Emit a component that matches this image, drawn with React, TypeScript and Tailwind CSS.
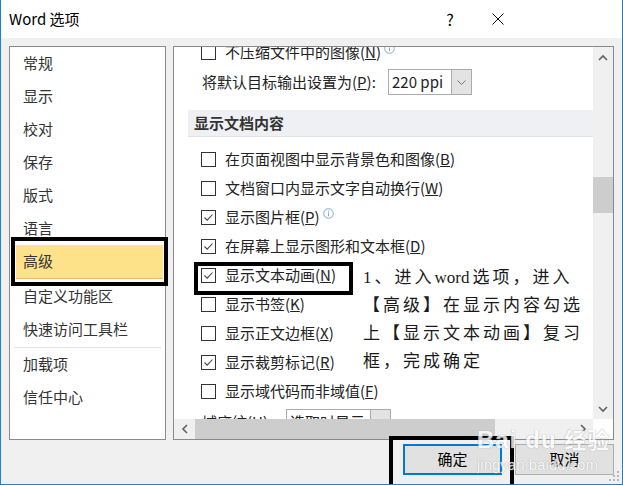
import React from "react";

const Info = () => (
  <svg width="11" height="11" viewBox="0 0 11 11" className="ml-[3px] -mt-[9px]">
    <circle cx="5.5" cy="5.5" r="4.8" fill="none" stroke="#86a5d6" strokeWidth="1" />
    <rect x="5" y="4.5" width="1" height="3.8" fill="#86a5d6" />
    <rect x="5" y="2.6" width="1" height="1" fill="#86a5d6" />
  </svg>
);

const Box = ({ on }: { on?: boolean }) => (
  <div className="w-[15px] h-[15px] border border-[#333] bg-white shrink-0 flex items-center justify-center">
    {on && (
      <svg width="13" height="13" viewBox="0 0 13 13">
        <path d="M2.5 6.5 L5.2 9.2 L10.5 3.5" fill="none" stroke="#444" strokeWidth="1.1" />
      </svg>
    )}
  </div>
);

const Row = ({ on, text, k, info }: { on?: boolean; text: string; k: string; info?: boolean }) => (
  <div className="h-[29px] flex items-center pl-[27px] gap-[9px] shrink-0">
    <Box on={on} />
    <span className="flex items-center whitespace-nowrap">
      {text}(<u>{k}</u>){info && <Info />}
    </span>
  </div>
);

const Chev = ({ dir }: { dir: "up" | "down" | "left" | "right" }) => {
  const d = {
    up: "M1 6 L5 2 L9 6",
    down: "M1 2 L5 6 L9 2",
    left: "M6 1 L2 5 L6 9",
    right: "M2 1 L6 5 L2 9",
  }[dir];
  const w = dir === "up" || dir === "down" ? 10 : 8;
  const h = dir === "up" || dir === "down" ? 8 : 10;
  return (
    <svg width={w} height={h} viewBox={`0 0 ${w} ${h}`}>
      <path d={d} fill="none" stroke="#606060" strokeWidth="1.6" />
    </svg>
  );
};

const SelArrow = () => (
  <svg width="9" height="5" viewBox="0 0 9 5">
    <path d="M0.5 0.5 L4.5 4.5 L8.5 0.5" fill="none" stroke="#666" strokeWidth="0.9" />
  </svg>
);

const navTop = ["常规", "显示", "校对", "保存", "版式", "语言"];

export default function App() {
  return (
    <div className="w-[623px] h-[485px] bg-white border-x border-b border-[#1883d7] flex flex-col relative overflow-hidden text-[#222] font-['Noto_Sans_CJK_SC',sans-serif]">
      {/* title bar */}
      <div className="h-[38px] shrink-0 flex items-center pl-[8px] text-[15px] text-black">
        <span className="flex-1">Word 选项</span>
        <span className="w-[20px] text-center text-[16px] mr-[32px]">?</span>
        <svg width="12" height="12" viewBox="0 0 12 12" className="mr-[118px]">
          <path d="M0.5 0.5 L11.5 11.5 M11.5 0.5 L0.5 11.5" stroke="#111" strokeWidth="1" />
        </svg>
      </div>

      {/* body */}
      <div className="flex-1 bg-[#f0f0f0] flex flex-col px-[8px] pt-[8px]">
        <div className="flex gap-[7px] h-[394px]">
          {/* left nav */}
          <div className="w-[157px] border border-[#8a8a8e] bg-white flex flex-col text-[15px] text-[#333] relative">
            {navTop.map((t) => (
              <div key={t} className="h-[33px] flex items-center pl-[13px] shrink-0">
                {t}
              </div>
            ))}
            <div className="h-[34px] mb-[1px] flex items-center ml-[6px] mr-[2px] pl-[7px] bg-[#fee28a] border-b border-[#e9b965] shrink-0">
              高级
            </div>
            <div className="h-[33px] flex items-center pl-[13px] shrink-0">自定义功能区</div>
            <div className="h-[33px] flex items-center pl-[13px] shrink-0">快速访问工具栏</div>
            <div className="mt-[1px] mx-[4px] h-px bg-[#e3e3ea] shrink-0" />
            <div className="h-[33px] flex items-center pl-[13px] shrink-0">加载项</div>
            <div className="h-[33px] flex items-center pl-[13px] shrink-0">信任中心</div>
            <div className="absolute left-[1px] top-[190px] w-[157px] h-[49px] border-[4px] border-black" />
          </div>

          {/* right panel */}
          <div className="w-[441px] border border-[#8a8a8e] bg-white flex flex-col">
            <div className="flex-1 flex min-h-0">
              <div className="flex-1 overflow-hidden flex flex-col text-[15px] text-[#222] relative">
                <div className="mt-[-9px]">
                  <Row text="不压缩文件中的图像" k="N" info />
                </div>
                <div className="h-[30px] flex items-center pl-[28px] shrink-0">
                  <span className="w-[186px] whitespace-nowrap">
                    将默认目标输出设置为(<u>P</u>):
                  </span>
                  <div className="h-[26px] w-[84px] border border-[#ababab] flex items-stretch">
                    <span className="flex-1 pl-[3px] flex items-center">220 ppi</span>
                    <span className="w-[20px] bg-[#e3e3e3] border-l border-[#ababab] flex items-center justify-center">
                      <SelArrow />
                    </span>
                  </div>
                </div>
                <div className="mt-[13px] ml-[14px] h-[27px] bg-[#eff0f3] border-b border-[#e0e2e8] flex items-center pl-[6px] font-bold text-[#333] shrink-0">
                  显示文档内容
                </div>
                <div className="h-[8px] shrink-0" />
                <Row text="在页面视图中显示背景色和图像" k="B" />
                <Row text="文档窗口内显示文字自动换行" k="W" />
                <Row on text="显示图片框" k="P" info />
                <Row on text="在屏幕上显示图形和文本框" k="D" />
                <Row on text="显示文本动画" k="N" />
                <Row text="显示书签" k="K" />
                <Row text="显示正文边框" k="X" />
                <Row on text="显示裁剪标记" k="R" />
                <Row text="显示域代码而非域值" k="F" />
                <div className="h-[29px] flex items-start pt-[3px] pl-[28px] shrink-0">
                  <span className="w-[84px] pt-[2px] whitespace-nowrap">
                    域底纹(<u>H</u>):
                  </span>
                  <div className="h-[26px] w-[105px] border border-[#ababab] flex items-stretch">
                    <span className="flex-1 pl-[3px] flex items-center whitespace-nowrap overflow-hidden">选取时显示</span>
                    <span className="w-[20px] bg-[#e3e3e3] border-l border-[#ababab] flex items-center justify-center">
                      <SelArrow />
                    </span>
                  </div>
                </div>
              </div>
              {/* v scrollbar */}
              <div className="w-[20px] bg-[#f0f0f0] flex flex-col">
                <div className="h-[21px] flex items-center justify-center">
                  <Chev dir="up" />
                </div>
                <div className="h-[109px]" />
                <div className="h-[36px] bg-[#cdcdcd]" />
                <div className="flex-1" />
                <div className="h-[21px] flex items-center justify-center">
                  <Chev dir="down" />
                </div>
              </div>
            </div>
            {/* h scrollbar */}
            <div className="h-[20px] flex shrink-0">
              <div className="flex-1 bg-[#f0f0f0] flex items-stretch">
                <div className="w-[21px] flex items-center justify-center">
                  <Chev dir="left" />
                </div>
                <div className="w-[300px] bg-[#cdcdcd]" />
                <div className="flex-1" />
                <div className="w-[21px] flex items-center justify-center">
                  <Chev dir="right" />
                </div>
              </div>
              <div className="w-[20px] bg-white" />
            </div>
          </div>
        </div>

        {/* buttons */}
        <div className="flex justify-end gap-[13px] mt-[4px] text-[15px] text-black">
          <div className="w-[99px] h-[31px] bg-[#e1e1e1] border-2 border-[#0078d7] flex items-center justify-center">
            确定
          </div>
          <div className="w-[99px] h-[31px] bg-[#e1e1e1] border border-[#adadad] flex items-center justify-center">
            取消
          </div>
        </div>
      </div>

      {/* annotations */}
      <div className="absolute left-[193px] top-[262px] w-[159px] h-[33px] border-[4px] border-black" />
      <div className="absolute left-[388px] top-[436px] w-[125px] h-[52px] border-[4px] border-black" />
      <div className="absolute left-[362px] top-[264px] text-[17px] leading-[28px] tracking-[3px] text-[#1a1a1a] font-['Liberation_Serif','Noto_Sans_CJK_SC',serif] whitespace-nowrap">
        <div>
          1、进入<span className="tracking-normal">wor</span>d选项，进入
        </div>
        <div>【高级】在显示内容勾选</div>
        <div>上【显示文本动画】复习</div>
        <div>框，完成确定</div>
      </div>

      {/* watermark */}
      <div className="absolute left-[476px] top-[424px] text-white font-['Liberation_Sans',sans-serif] opacity-80 [text-shadow:0_0_1px_#aaa,0_0_1px_#aaa] pointer-events-none">
        <div className="text-[24px] font-bold leading-[28px] tracking-[1px]">
          Bai<span className="inline-block w-[8px]" />du <span className="font-['Noto_Sans_CJK_SC'] text-[22px]">经验</span>
        </div>
        <div className="text-[15px] leading-[18px] mt-[2px]">jingyan.baidu.com</div>
      </div>

      {/* resize grip */}
      <svg width="10" height="10" viewBox="0 0 10 10" className="absolute right-[3px] bottom-[3px]">
        {[[8, 0], [8, 4], [4, 4], [8, 8], [4, 8], [0, 8]].map(([x, y], i) => (
          <rect key={i} x={x} y={y} width="2" height="2" fill="#b8b8b8" />
        ))}
      </svg>
    </div>
  );
}
